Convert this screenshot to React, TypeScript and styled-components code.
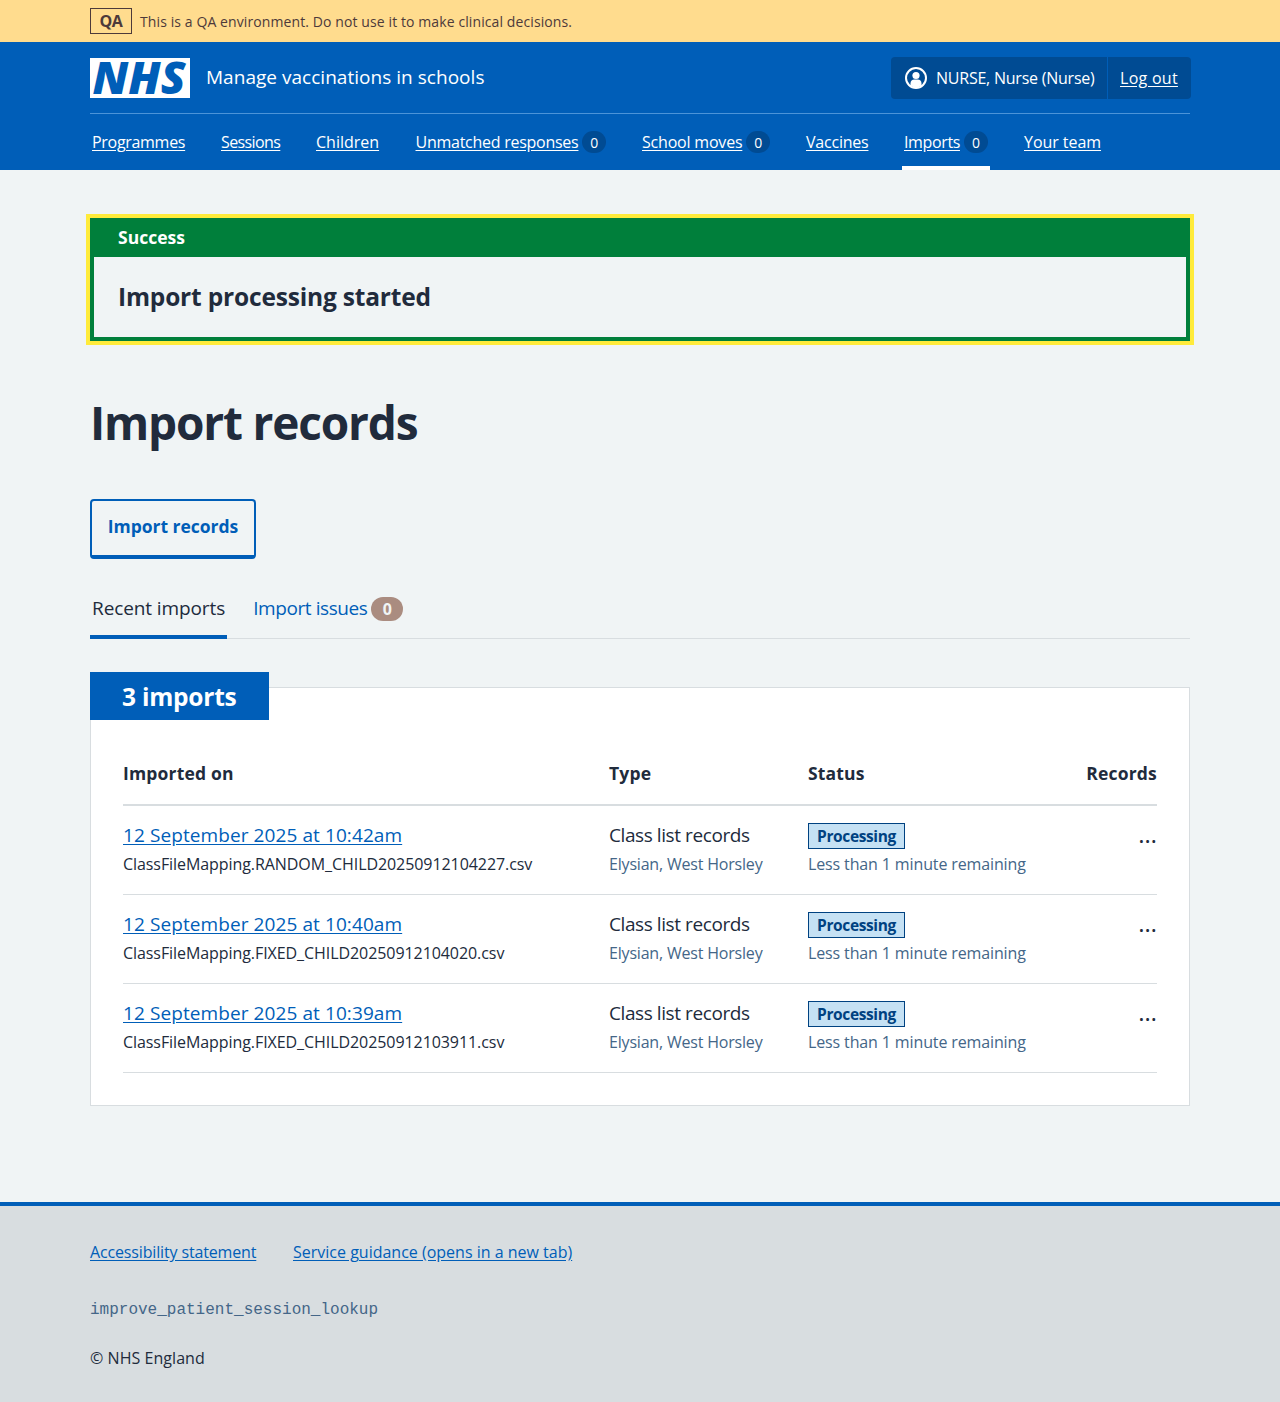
import React from "react";
import styled, { createGlobalStyle } from "styled-components";

const Global = createGlobalStyle`
  *, *::before, *::after { box-sizing: border-box; }
  body {
    margin: 0;
    background: #f0f4f5;
    color: #212b3c;
    font-family: "Open Sans", "Noto Sans", sans-serif;
    font-size: 19px;
    line-height: 28px;
  }
  h1, h2, p { margin: 0; }
`;

const Container = styled.div`
  width: 1100px;
  margin: 0 auto;
`;

const T = styled.span<{ $ls?: number }>`
  letter-spacing: ${(p) => p.$ls ?? 0}px;
  white-space: nowrap;
`;

const Environment = styled.div`
  height: 42px;
  background: #ffdc8e;
  color: #4d3a3a;
  font-size: 14px;
  line-height: 28px;
`;
const EnvironmentRow = styled(Container)`
  display: flex;
  gap: 8px;
  padding-top: 8px;
`;
const EnvironmentTag = styled.strong`
  width: 42px;
  height: 26px;
  border: 1px solid #4d3a3a;
  font-size: 16px;
  font-weight: 700;
  letter-spacing: -0.5px;
  line-height: 24px;
  text-align: center;
`;

const Header = styled.header`
  height: 128px;
  background: #005eb8;
  color: #fff;
`;
const HeaderTop = styled(Container)`
  display: flex;
  align-items: center;
  height: 72px;
  border-bottom: 1px solid #4c94d8;
`;
const Service = styled.span`
  margin-left: 16px;
  flex: 1;
  padding-bottom: 2px;
  letter-spacing: 0.03px;
  line-height: 28px;
`;
const Account = styled.div`
  display: flex;
  width: 300px;
  height: 42px;
  margin-right: -1px;
  border-radius: 4px;
  background: #004b93;
  font-size: 16px;
  line-height: 42px;
`;
const AccountUser = styled.div`
  display: flex;
  align-items: center;
  width: 217px;
  padding-left: 14px;
  gap: 9px;
  border-right: 1px solid #005eb8;
`;
const AccountLink = styled.a`
  padding-left: 12px;
  text-decoration: underline;
  text-underline-offset: 2px;
`;

const Nav = styled(Container)`
  display: flex;
  height: 56px;
  font-size: 16px;
`;
const NavItem = styled.div<{ $w: number; $current?: boolean }>`
  display: flex;
  align-items: center;
  gap: 4px;
  width: ${(p) => p.$w}px;
  margin-right: 32px;
  padding: 4px 2px 0;
  border-bottom: 4px solid ${(p) => (p.$current ? "#fff" : "transparent")};
  a { text-decoration: underline; text-underline-offset: 2px; }
`;
const NavCount = styled.span`
  width: 24px;
  height: 22px;
  border-radius: 12px;
  background: #004b93;
  font-size: 14px;
  line-height: 23px;
  text-align: center;
`;

const Main = styled.main`
  height: 1032px;
  padding-top: 48px;
`;
const Notice = styled.section`
  height: 123px;
  border: 4px solid #007f3b;
  border-top: 0;
  outline: 4px solid #ffeb3b;
`;
const NoticeTitle = styled.h2`
  height: 39px;
  padding: 5px 24px 0;
  background: #007f3b;
  color: #fff;
  font-size: 17.5px;
  font-weight: 700;
  line-height: 28px;
`;
const NoticeText = styled.p`
  padding: 22px 24px 0;
  font-size: 24.5px;
  font-weight: 700;
  letter-spacing: -0.18px;
  line-height: 36px;
`;
const Title = styled.h1`
  margin: 53px 0 0;
  font-size: 46px;
  font-weight: 700;
  letter-spacing: -1.18px;
  line-height: 56px;
`;
const Button = styled.button`
  display: block;
  width: 166px;
  height: 60px;
  margin-top: 49px;
  padding: 0 0 4px;
  border: 2px solid #005eb8;
  border-bottom-width: 4px;
  border-radius: 4px;
  background: transparent;
  color: #005eb8;
  font: 700 17.5px/28px "Open Sans", "Noto Sans", sans-serif;
  letter-spacing: -0.03px;
`;
const Tabs = styled.nav`
  display: flex;
  gap: 24px;
  height: 56px;
  margin-top: 24px;
  border-bottom: 1px solid #d8dde0;
`;
const Tab = styled.a<{ $current?: boolean }>`
  display: flex;
  gap: 4px;
  height: 56px;
  padding: 11px 2px 0;
  border-bottom: 4px solid ${(p) => (p.$current ? "#005eb8" : "transparent")};
  color: ${(p) => (p.$current ? "#212b3c" : "#005eb8")};
`;
const TabCount = styled.span`
  width: 32px;
  height: 24px;
  margin-top: 3px;
  border-radius: 12px;
  background: #aa8c80;
  color: #f0f4f5;
  font-size: 16px;
  font-weight: 700;
  line-height: 24px;
  text-align: center;
`;

const Card = styled.section`
  height: 419px;
  margin-top: 48px;
  padding: 0 32px;
  border: 1px solid #d8dde0;
  background: #fff;
`;
const CardLabel = styled.h2`
  width: 179px;
  height: 48px;
  margin: -16px 0 0 -33px;
  padding-left: 32px;
  background: #005eb8;
  color: #fff;
  font-size: 24.5px;
  font-weight: 700;
  letter-spacing: -0.22px;
  line-height: 49px;
`;
const Row = styled.div`
  display: grid;
  grid-template-columns: 486px 199px 1fr 100px;
  height: 89px;
  padding-top: 15px;
  border-bottom: 1px solid #d8dde0;
`;
const HeadRow = styled(Row)`
  height: 62px;
  margin-top: 24px;
  border-bottom-width: 2px;
  font-size: 17.5px;
  font-weight: 700;
  letter-spacing: 0.18px;
`;
const Cell = styled.div<{ $right?: boolean }>`
  text-align: ${(p) => (p.$right ? "right" : "left")};
`;
const Dots = styled.div`
  font-size: 24px;
  line-height: 26px;
`;
const DateLink = styled.a`
  display: block;
  color: #005eb8;
  text-decoration: underline;
  text-underline-offset: 2px;
`;
const Small = styled.div<{ $muted?: boolean }>`
  margin-top: 1px;
  color: ${(p) => (p.$muted ? "#446688" : "#212b3c")};
  font-size: 16px;
  line-height: 28px;
`;
const Tag = styled.strong`
  display: block;
  width: 97px;
  height: 26px;
  margin: 2px 0 0;
  border: 1px solid #004281;
  background: #c5e1f4;
  color: #004281;
  font-size: 15.5px;
  font-weight: 700;
  letter-spacing: -0.38px;
  line-height: 24px;
  text-align: center;
`;

const Footer = styled.footer`
  height: 200px;
  padding-top: 32px;
  border-top: 4px solid #005eb8;
  background: #d8dde0;
  font-size: 16px;
  line-height: 28px;
`;
const FooterLinks = styled.div`
  display: flex;
  color: #005eb8;
  a { text-decoration: underline; text-underline-offset: 2px; }
  a:first-child { width: 203px; }
`;
const Branch = styled.p`
  margin-top: 30px;
  color: #446688;
  font-family: "Liberation Mono", monospace;
`;
const Copyright = styled.p`
  margin-top: 20px;
`;

const LogoSvg = styled.svg`
  overflow: visible;
`;

const Logo = () => (
  <LogoSvg width="100" height="40" viewBox="0 0 100 40" aria-label="NHS">
    <rect width="100" height="40" fill="#fff" />
    <text x="2.5" y="36" fill="#005eb8" fontFamily="Open Sans" fontWeight="800" fontStyle="italic" fontSize="45" textLength="93" lengthAdjust="spacingAndGlyphs">NHS</text>
  </LogoSvg>
);

const UserIcon = () => (
  <svg width="22" height="22" viewBox="0 0 22 22">
    <circle cx="11" cy="11" r="10" fill="none" stroke="#fff" strokeWidth="2" />
    <circle cx="11" cy="8.5" r="3.6" fill="#fff" />
    <path d="M5.5 18.5v-2c0-2.500 1.500-4 4-4h3c2.500 0 4 1.500 4 4v2A10 10 0 0 1 11 20.500a10 10 0 0 1-5.500-2Z" fill="#fff" />
  </svg>
);

const navigation = [
  { label: "Programmes", w: 97, ls: -0.3 },
  { label: "Sessions", w: 63, ls: -0.6 },
  { label: "Children", w: 67.5, ls: 0 },
  { label: "Unmatched responses", w: 194.5, ls: -0.26, count: 0 },
  { label: "School moves", w: 132, ls: -0.2, count: 0 },
  { label: "Vaccines", w: 66, ls: -0.22 },
  { label: "Imports", w: 88, ls: -0.37, count: 0, current: true },
  { label: "Your team", w: 81, ls: -0.05 },
];

const imports = [
  { date: "12 September 2025 at 10:42am", file: "ClassFileMapping.RANDOM_CHILD20250912104227.csv" },
  { date: "12 September 2025 at 10:40am", file: "ClassFileMapping.FIXED_CHILD20250912104020.csv" },
  { date: "12 September 2025 at 10:39am", file: "ClassFileMapping.FIXED_CHILD20250912103911.csv" },
];

export default function App() {
  return (
    <>
      <Global />
      <Environment>
        <EnvironmentRow>
          <EnvironmentTag>QA</EnvironmentTag>
          <T $ls={0.1}>This is a QA environment. Do not use it to make clinical decisions.</T>
        </EnvironmentRow>
      </Environment>
      <Header>
        <HeaderTop>
          <Logo />
          <Service>Manage vaccinations in schools</Service>
          <Account>
            <AccountUser>
              <UserIcon />
              <T $ls={-0.23}>NURSE, Nurse (Nurse)</T>
            </AccountUser>
            <AccountLink><T $ls={0.28}>Log out</T></AccountLink>
          </Account>
        </HeaderTop>
        <Nav>
          {navigation.map((item) => (
            <NavItem key={item.label} $w={item.w} $current={item.current}>
              <a><T $ls={item.ls}>{item.label}</T></a>
              {item.count !== undefined && <NavCount>{item.count}</NavCount>}
            </NavItem>
          ))}
        </Nav>
      </Header>
      <Main>
        <Container>
          <Notice>
            <NoticeTitle>Success</NoticeTitle>
            <NoticeText>Import processing started</NoticeText>
          </Notice>
          <Title>Import records</Title>
          <Button>Import records</Button>
          <Tabs>
            <Tab $current><T $ls={-0.1}>Recent imports</T></Tab>
            <Tab><T $ls={-0.42}>Import issues</T><TabCount>0</TabCount></Tab>
          </Tabs>
          <Card>
            <CardLabel>3 imports</CardLabel>
            <HeadRow>
              <Cell>Imported on</Cell>
              <Cell>Type</Cell>
              <Cell>Status</Cell>
              <Cell $right>Records</Cell>
            </HeadRow>
            {imports.map((item) => (
              <Row key={item.date}>
                <Cell>
                  <DateLink><T $ls={0.09}>{item.date}</T></DateLink>
                  <Small><T $ls={-0.07}>{item.file}</T></Small>
                </Cell>
                <Cell>
                  <T $ls={-0.42}>Class list records</T>
                  <Small $muted><T $ls={-0.19}>Elysian, West Horsley</T></Small>
                </Cell>
                <Cell>
                  <Tag>Processing</Tag>
                  <Small $muted><T $ls={-0.13}>Less than 1 minute remaining</T></Small>
                </Cell>
                <Cell $right><Dots>…</Dots></Cell>
              </Row>
            ))}
          </Card>
        </Container>
      </Main>
      <Footer>
        <Container>
          <FooterLinks>
            <a><T $ls={-0.15}>Accessibility statement</T></a>
            <a><T>Service guidance (opens in a new tab)</T></a>
          </FooterLinks>
          <Branch>improve_patient_session_lookup</Branch>
          <Copyright><T $ls={0.05}>© NHS England</T></Copyright>
        </Container>
      </Footer>
    </>
  );
}
